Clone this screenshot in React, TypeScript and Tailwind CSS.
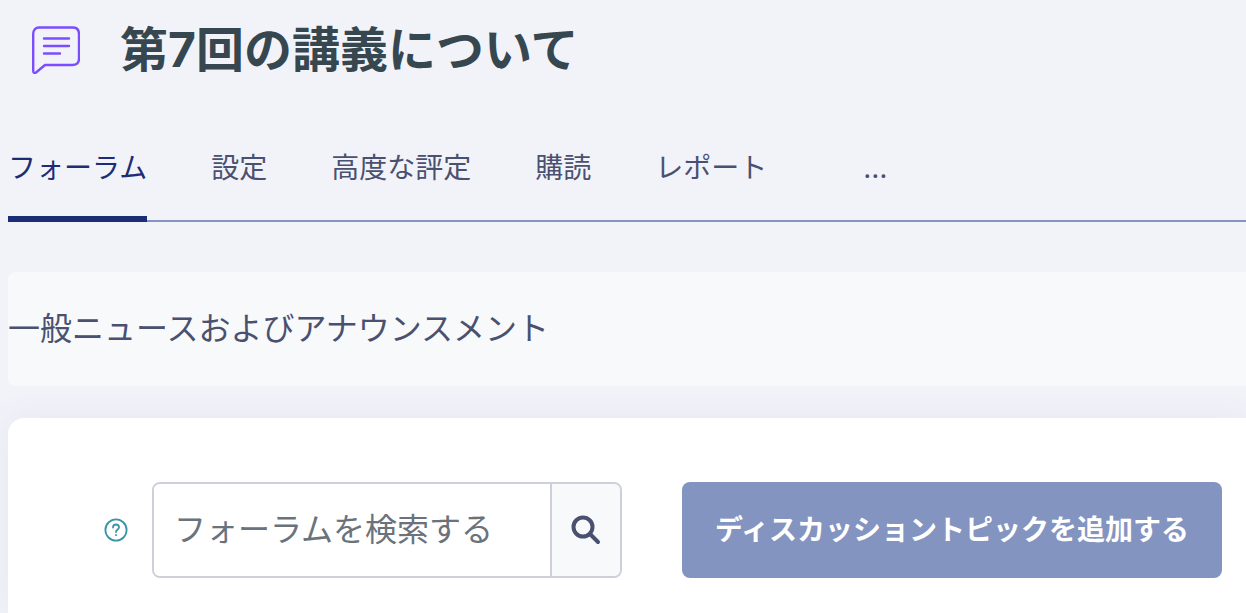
import React, { useState } from 'react';

const tabs = ['フォーラム', '設定', '高度な評定', '購読', 'レポート'];

const ForumIcon: React.FC = () => (
  <svg className="h-12 w-12 shrink-0" viewBox="0 0 48 48" fill="none" stroke="#7c4dff" strokeWidth="2.4" strokeLinecap="round" strokeLinejoin="round" aria-hidden="true">
    <path d="M7 1.5H40.5C44.5 1.5 47 4 47 8V32.500C47 36.500 44.500 39 40.500 39H13L4 46.500C2.500 47.500 1.200 47 1.200 45V8C1.200 4 3.500 1.500 7 1.500Z" />
    <path d="M12 12.500H37M12 20H37M12 27.500H28" />
  </svg>
);

const App: React.FC = () => {
  const [activeTab, setActiveTab] = useState(tabs[0]);
  const [query, setQuery] = useState('');

  return (
    <div className="min-h-screen overflow-hidden bg-[#f2f3f9] pl-2 font-['Inter','Noto_Sans_CJK_JP',sans-serif] text-[#4a5170]" lang="ja">
      <header className="flex h-25 items-center gap-10 pl-6">
        <ForumIcon />
        <h1 className="text-5xl font-bold text-[#37474f]">第7回の講義について</h1>
      </header>

      <nav className="mt-10 flex h-[82px] items-stretch gap-16 border-b-2 border-[#8494c0]">
        {tabs.map((tab) => (
          <button
            key={tab}
            type="button"
            onClick={() => setActiveTab(tab)}
            className={
              tab === activeTab
                ? '-mb-0.5 border-b-6 border-[#1d2d75] pb-5 text-[28px] text-[#1d2d75]'
                : 'pb-6 text-[28px]'
            }
          >
            {tab}
          </button>
        ))}
        <button type="button" aria-label="その他" className="ml-8 pb-6 text-[28px]">…</button>
      </nav>

      <section className="mt-[50px] flex h-[114px] items-center rounded-l-lg bg-[#f8f9fb]">
        <p className="text-[32px]">一般ニュースおよびアナウンスメント</p>
      </section>

      <main className="mt-8 min-h-[195px] rounded-tl-2xl bg-white pt-16 pr-6 pl-24 shadow-[0_0_32px_rgba(80,90,140,0.08)]">
        <div className="flex items-center">
          <button type="button" aria-label="ヘルプ" className="text-[#3a94a8]">
            <svg className="h-6 w-6" viewBox="0 0 24 24" fill="none" stroke="currentColor" strokeWidth="1.800" strokeLinecap="round" aria-hidden="true">
              <circle cx="12" cy="12" r="10.600" />
              <path d="M9 9.500C9 5.500 15 5.500 15 9.500C15 11.500 12 11.500 12 14M12 17V17.200" />
            </svg>
          </button>
          <form className="ml-6 flex h-24 w-[470px] overflow-hidden rounded-lg border-2 border-[#cdd0da]" onSubmit={(e) => e.preventDefault()}>
            <input
              type="text"
              aria-label="フォーラムを検索する"
              placeholder="フォーラムを検索する"
              value={query}
              onChange={(e) => setQuery(e.target.value)}
              className="min-w-0 flex-1 bg-white px-5 text-[32px] outline-none placeholder:text-[#6a737b]"
            />
            <button type="submit" aria-label="検索" className="flex w-[70px] items-center justify-center border-l-2 border-[#cdd0da] bg-[#f8f9fb]">
              <svg className="h-8 w-8" viewBox="0 0 32 32" fill="none" stroke="#4a5170" strokeWidth="4" strokeLinecap="round" aria-hidden="true">
                <circle cx="13" cy="13" r="9.500" />
                <path d="M20.500 20.500L28 28" />
              </svg>
            </button>
          </form>
          <button type="button" className="ml-[60px] h-24 flex-1 rounded-lg bg-[#8494c0] text-[28px] font-bold whitespace-nowrap text-white">
            ディスカッショントピックを追加する
          </button>
        </div>
      </main>
    </div>
  );
};

export default App;
